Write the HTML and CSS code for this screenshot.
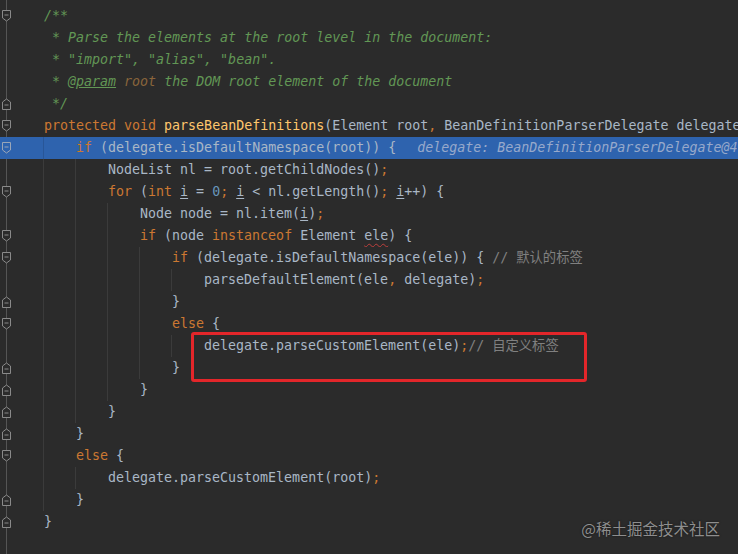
FILE: index.html
```html
<!DOCTYPE html>
<html lang="en">
<head>
<meta charset="utf-8">
<title>parseBeanDefinitions</title>
<link rel="stylesheet" href="styles.css">
</head>
<body>
<div class="editor">
  <div class="lines">
    <div class="row"><div class="gutter"><svg class="fold" width="9" height="12" viewBox="0 0 9 12"><path d="M0.5 0.5H8.5V8L4.5 11L0.5 8Z"/><path d="M2.5 5H6.5"/></svg></div><div class="code"><span class="doc">/**</span></div></div>
    <div class="row"><div class="gutter"></div><div class="code"><span class="doc"> * Parse the elements at the root level in the document:</span></div></div>
    <div class="row"><div class="gutter"></div><div class="code"><span class="doc"> * "import", "alias", "bean".</span></div></div>
    <div class="row"><div class="gutter"></div><div class="code"><span class="doc"> * <span class="tag">@param</span> <span class="pname">root</span> the DOM root element of the document</span></div></div>
    <div class="row"><div class="gutter"><svg class="fold" width="9" height="12" viewBox="0 0 9 12"><path d="M4.5 1L8.5 4V11.5H0.5V4Z"/><path d="M2.5 7H6.5"/></svg></div><div class="code"><span class="doc"> */</span></div></div>
    <div class="row"><div class="gutter"><svg class="fold" width="9" height="12" viewBox="0 0 9 12"><path d="M0.5 0.5H8.5V8L4.5 11L0.5 8Z"/><path d="M2.5 5H6.5"/></svg></div><div class="code"><span class="kw">protected void </span><span class="fn">parseBeanDefinitions</span>(Element root<span class="kw">, </span>BeanDefinitionParserDelegate delegate) {</div></div>
    <div class="row current"><div class="gutter"><svg class="fold" width="9" height="12" viewBox="0 0 9 12"><path d="M0.5 0.5H8.5V8L4.5 11L0.5 8Z"/><path d="M2.5 5H6.5"/></svg></div><div class="code"><span class="ind"></span><span class="kw">if </span>(delegate.isDefaultNamespace(root)) {<span class="hint">delegate: BeanDefinitionParserDelegate@4</span></div></div>
    <div class="row"><div class="gutter"></div><div class="code"><span class="ind"></span><span class="ind"></span>NodeList nl = root.getChildNodes()<span class="kw">;</span></div></div>
    <div class="row"><div class="gutter"><svg class="fold" width="9" height="12" viewBox="0 0 9 12"><path d="M0.5 0.5H8.5V8L4.5 11L0.5 8Z"/><path d="M2.5 5H6.5"/></svg></div><div class="code"><span class="ind"></span><span class="ind"></span><span class="kw">for </span>(<span class="kw">int </span><span class="var">i</span> = <span class="num">0</span><span class="kw">; </span><span class="var">i</span> &lt; nl.getLength()<span class="kw">; </span><span class="var">i</span>++) {</div></div>
    <div class="row"><div class="gutter"></div><div class="code"><span class="ind"></span><span class="ind"></span><span class="ind"></span>Node node = nl.item(<span class="var">i</span>)<span class="kw">;</span></div></div>
    <div class="row"><div class="gutter"><svg class="fold" width="9" height="12" viewBox="0 0 9 12"><path d="M0.5 0.5H8.5V8L4.5 11L0.5 8Z"/><path d="M2.5 5H6.5"/></svg></div><div class="code"><span class="ind"></span><span class="ind"></span><span class="ind"></span><span class="kw">if </span>(node <span class="kw">instanceof </span>Element <span class="err">ele</span>) {</div></div>
    <div class="row"><div class="gutter"><svg class="fold" width="9" height="12" viewBox="0 0 9 12"><path d="M0.5 0.5H8.5V8L4.5 11L0.5 8Z"/><path d="M2.5 5H6.5"/></svg></div><div class="code"><span class="ind"></span><span class="ind"></span><span class="ind"></span><span class="ind"></span><span class="kw">if </span>(delegate.isDefaultNamespace(ele)) { <span class="cmt">// 默认的标签</span></div></div>
    <div class="row"><div class="gutter"></div><div class="code"><span class="ind"></span><span class="ind"></span><span class="ind"></span><span class="ind"></span><span class="ind"></span>parseDefaultElement(ele<span class="kw">, </span>delegate)<span class="kw">;</span></div></div>
    <div class="row"><div class="gutter"><svg class="fold" width="9" height="12" viewBox="0 0 9 12"><path d="M4.5 1L8.5 4V11.5H0.5V4Z"/><path d="M2.5 7H6.5"/></svg></div><div class="code"><span class="ind"></span><span class="ind"></span><span class="ind"></span><span class="ind"></span>}</div></div>
    <div class="row"><div class="gutter"><svg class="fold" width="9" height="12" viewBox="0 0 9 12"><path d="M0.5 0.5H8.5V8L4.5 11L0.5 8Z"/><path d="M2.5 5H6.5"/></svg></div><div class="code"><span class="ind"></span><span class="ind"></span><span class="ind"></span><span class="ind"></span><span class="kw">else </span>{</div></div>
    <div class="row"><div class="gutter"></div><div class="code"><span class="ind"></span><span class="ind"></span><span class="ind"></span><span class="ind"></span><span class="ind"></span>delegate.parseCustomElement(ele)<span class="kw">;</span><span class="cmt">// 自定义标签</span></div></div>
    <div class="row"><div class="gutter"><svg class="fold" width="9" height="12" viewBox="0 0 9 12"><path d="M4.5 1L8.5 4V11.5H0.5V4Z"/><path d="M2.5 7H6.5"/></svg></div><div class="code"><span class="ind"></span><span class="ind"></span><span class="ind"></span><span class="ind"></span>}</div></div>
    <div class="row"><div class="gutter"><svg class="fold" width="9" height="12" viewBox="0 0 9 12"><path d="M4.5 1L8.5 4V11.5H0.5V4Z"/><path d="M2.5 7H6.5"/></svg></div><div class="code"><span class="ind"></span><span class="ind"></span><span class="ind"></span>}</div></div>
    <div class="row"><div class="gutter"><svg class="fold" width="9" height="12" viewBox="0 0 9 12"><path d="M4.5 1L8.5 4V11.5H0.5V4Z"/><path d="M2.5 7H6.5"/></svg></div><div class="code"><span class="ind"></span><span class="ind"></span>}</div></div>
    <div class="row"><div class="gutter"><svg class="fold" width="9" height="12" viewBox="0 0 9 12"><path d="M4.5 1L8.5 4V11.5H0.5V4Z"/><path d="M2.5 7H6.5"/></svg></div><div class="code"><span class="ind"></span>}</div></div>
    <div class="row"><div class="gutter"><svg class="fold" width="9" height="12" viewBox="0 0 9 12"><path d="M0.5 0.5H8.5V8L4.5 11L0.5 8Z"/><path d="M2.5 5H6.5"/></svg></div><div class="code"><span class="ind"></span><span class="kw">else </span>{</div></div>
    <div class="row"><div class="gutter"></div><div class="code"><span class="ind"></span><span class="ind"></span>delegate.parseCustomElement(root)<span class="kw">;</span></div></div>
    <div class="row"><div class="gutter"><svg class="fold" width="9" height="12" viewBox="0 0 9 12"><path d="M4.5 1L8.5 4V11.5H0.5V4Z"/><path d="M2.5 7H6.5"/></svg></div><div class="code"><span class="ind"></span>}</div></div>
    <div class="row"><div class="gutter"><svg class="fold" width="9" height="12" viewBox="0 0 9 12"><path d="M4.5 1L8.5 4V11.5H0.5V4Z"/><path d="M2.5 7H6.5"/></svg></div><div class="code">}</div></div>
  </div>
  <div class="mark"></div>
  <div class="watermark">@稀土掘金技术社区</div>
</div>
</body>
</html>
```

FILE: styles.css
```css
html, body {
  margin: 0;
  padding: 0;
  background: #2b2b2b;
}

.editor {
  position: relative;
  width: 738px;
  height: 554px;
  overflow: hidden;
  background: linear-gradient(#555555, #555555) 6px 0 / 1px 100% no-repeat, #2b2b2b;
  font-family: "DejaVu Sans Mono", "Noto Sans CJK SC", monospace;
  font-size: 13.3px;
  color: #a9b7c6;
}

.lines {
  display: flex;
  flex-direction: column;
  padding-top: 5px;
}

.row {
  display: flex;
  height: 22px;
  line-height: 22px;
}

.row.current {
  background: #2e63ae;
}

.gutter {
  flex: none;
  width: 43px;
  display: flex;
  align-items: center;
}

.fold {
  margin-left: 2px;
  fill: #2b2b2b;
  stroke: #8a8a8a;
  stroke-width: 1;
}

.current .fold {
  fill: #2e63ae;
  stroke: #9aa6b8;
}

.code {
  flex: 1;
  padding-left: 1px;
  white-space: pre;
  overflow: hidden;
}

.ind {
  display: inline-block;
  width: 32px;
  height: 22px;
  vertical-align: top;
  box-shadow: -1px 0 0 #3b3b3b;
}

.current .ind {
  box-shadow: -1px 0 0 #285698;
}

.doc { color: #629755; font-style: italic; }
.tag { text-decoration: underline; }
.pname { color: #8a653b; }
.kw { color: #cc7832; }
.fn { color: #ffc66d; }
.num { color: #6897bb; }
.cmt { color: #808080; }
.var { text-decoration: underline; text-underline-offset: 2px; }
.err { text-decoration: underline wavy #bc3f3c; text-underline-offset: 3px; text-decoration-thickness: 1px; }

.hint {
  margin-left: 21px;
  color: #97a9cb;
  font-style: italic;
}

.mark {
  position: absolute;
  left: 191px;
  top: 332px;
  width: 396px;
  height: 50px;
  box-sizing: border-box;
  border: 3px solid #e3262a;
  border-radius: 3px;
}

.watermark {
  position: absolute;
  right: 18px;
  bottom: 17px;
  font-family: "Noto Sans CJK SC", sans-serif;
  font-size: 15.5px;
  line-height: 18px;
  color: #8e8e8e;
  text-shadow: 0 0 2px rgba(0, 0, 0, 0.6);
}
```
